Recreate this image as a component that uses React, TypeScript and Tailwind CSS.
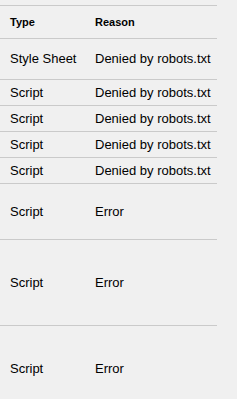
import React from 'react';

type Row = { type: string; reason: string; h: string };

const rows: Row[] = [
  { type: 'Style Sheet', reason: 'Denied by robots.txt', h: 'h-[41px]' },
  { type: 'Script', reason: 'Denied by robots.txt', h: 'h-[26px]' },
  { type: 'Script', reason: 'Denied by robots.txt', h: 'h-[26px]' },
  { type: 'Script', reason: 'Denied by robots.txt', h: 'h-[26px]' },
  { type: 'Script', reason: 'Denied by robots.txt', h: 'h-[26px]' },
  { type: 'Script', reason: 'Error', h: 'h-[56px]' },
  { type: 'Script', reason: 'Error', h: 'h-[86px]' },
  { type: 'Script', reason: 'Error', h: 'h-[86px]' },
];

const App: React.FC = () => {
  return (
    <div className="flex h-[399px] overflow-hidden bg-white font-['Liberation_Sans',Arial,sans-serif] text-black">
      <div className="w-[237px] shrink-0 bg-[#f0f0f0] pt-[5px]">
        <div className="w-[217px]">
          {/* Header */}
          <div className="grid h-[33px] grid-cols-[85px_1fr] items-center border-t border-[#cacaca] text-[11px] font-bold">
            <span className="pl-[10px]">Type</span>
            <span className="pl-[10px]">Reason</span>
          </div>

          {rows.map((r, i) => (
            <div
              key={i}
              className={`grid ${r.h} grid-cols-[85px_1fr] items-center border-t border-[#cacaca] text-[13px]`}
            >
              <span className="pl-[10px] whitespace-nowrap">{r.type}</span>
              <span className="pl-[10px] whitespace-nowrap">{r.reason}</span>
            </div>
          ))}
        </div>
      </div>
      <div className="flex-1 bg-white" />
    </div>
  );
};

export default App;
